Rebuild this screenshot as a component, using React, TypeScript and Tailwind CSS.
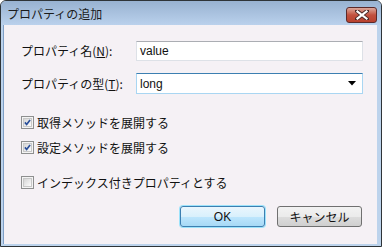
import React from "react";

const font = { fontFamily: '"Noto Sans CJK JP", "Liberation Sans", sans-serif' };

function CheckBox({ checked }: { checked: boolean }) {
  return (
    <div className="w-[13px] h-[13px] border border-[#8e8f8f] bg-[#f4f4f4] p-[1px] shrink-0">
      <div className="w-full h-full border border-[#c8c8c8] bg-gradient-to-br from-[#d5d5d5] to-[#fdfdfd] flex items-center justify-center">
        {checked && (
          <svg width="9" height="9" viewBox="0 0 9 9">
            <path d="M1.2 4.3 L3.4 7 L7.8 1.2" fill="none" stroke="#2a4f9a" strokeWidth="2.2" />
          </svg>
        )}
      </div>
    </div>
  );
}

export default function App() {
  return (
    <div
      className="w-[382px] h-[247px] border border-[#2e3438] rounded-t-[6px] bg-[#bcd3ec] flex flex-col overflow-hidden text-[12px] text-[#111]"
      style={font}
    >
      <div className="h-[24px] shrink-0 bg-gradient-to-b from-[#98b2d1] to-[#bad1ec] flex items-center justify-between pl-[6px] pr-[4px]">
        <span className="text-[12px] leading-none text-[#1b1b1b] pt-[1px]">プロパティの追加</span>
        <div className="w-[31px] h-[16px] mt-[3px] rounded-[3px] border border-[#5c2a2a] bg-gradient-to-b from-[#dba79b] via-[#c2513f] to-[#b8412e] flex items-center justify-center">
          <svg width="14" height="10" viewBox="0 0 14 10">
            <path d="M2 1 L12 9 M12 1 L2 9" stroke="#4a2a2a" strokeWidth="4" strokeLinecap="square" />
            <path d="M2.5 1.5 L11.5 8.5 M11.5 1.5 L2.5 8.5" stroke="#ffffff" strokeWidth="2.2" strokeLinecap="square" />
          </svg>
        </div>
      </div>
      <div className="flex-1 ml-[2px] mr-[4px] mb-[2px] bg-[#f5f1f5] border-l border-[#7f9fc6] flex flex-col pt-[16px] pl-[17px] pr-[14px]">
        <div className="flex items-center h-[20px]">
          <span className="w-[115px] shrink-0">
            プロパティ名(<span className="underline">N</span>):
          </span>
          <div className="flex-1 h-[20px] bg-white border border-[#dde1e7] border-t-[#abadb3] flex items-center pl-[3px]">
            <span style={{ fontFamily: '"Liberation Sans", sans-serif' }}>value</span>
          </div>
        </div>
        <div className="flex items-center h-[21px] mt-[12px]">
          <span className="w-[115px] shrink-0">
            プロパティの型(<span className="underline">T</span>):
          </span>
          <div className="flex-1 h-[21px] bg-white border border-[#a9d6f2] border-t-[#3c7fb1] flex items-center justify-between pl-[3px] pr-[6px]">
            <span style={{ fontFamily: '"Liberation Sans", sans-serif' }}>long</span>
            <svg width="8" height="5" viewBox="0 0 8 5">
              <path d="M0 0 H8 L4 4.5 Z" fill="#000" />
            </svg>
          </div>
        </div>
        <div className="flex items-center gap-[3px] h-[13px] mt-[22px]">
          <CheckBox checked />
          <span>取得メソッドを展開する</span>
        </div>
        <div className="flex items-center gap-[3px] h-[13px] mt-[12px]">
          <CheckBox checked />
          <span>設定メソッドを展開する</span>
        </div>
        <div className="flex items-center gap-[3px] h-[13px] mt-[22px]">
          <CheckBox checked={false} />
          <span>インデックス付きプロパティとする</span>
        </div>
        <div className="flex justify-end gap-[12px] mt-[17px] pr-[1px]">
          <div className="w-[85px] h-[21px] rounded-[3px] border border-[#3c7fb1] shadow-[0_0_0_1px_#9de3fb] bg-[linear-gradient(to_bottom,#eaf6fd_0%,#d9f0fc_50%,#bee6fd_50%,#a7d9f5_100%)] flex items-center justify-center">
            <span style={{ fontFamily: '"Liberation Sans", sans-serif' }}>OK</span>
          </div>
          <div className="w-[85px] h-[21px] rounded-[3px] border border-[#707070] bg-[linear-gradient(to_bottom,#f2f2f2_0%,#ebebeb_50%,#dddddd_50%,#cfcfcf_100%)] flex items-center justify-center">
            <span>キャンセル</span>
          </div>
        </div>
      </div>
    </div>
  );
}
